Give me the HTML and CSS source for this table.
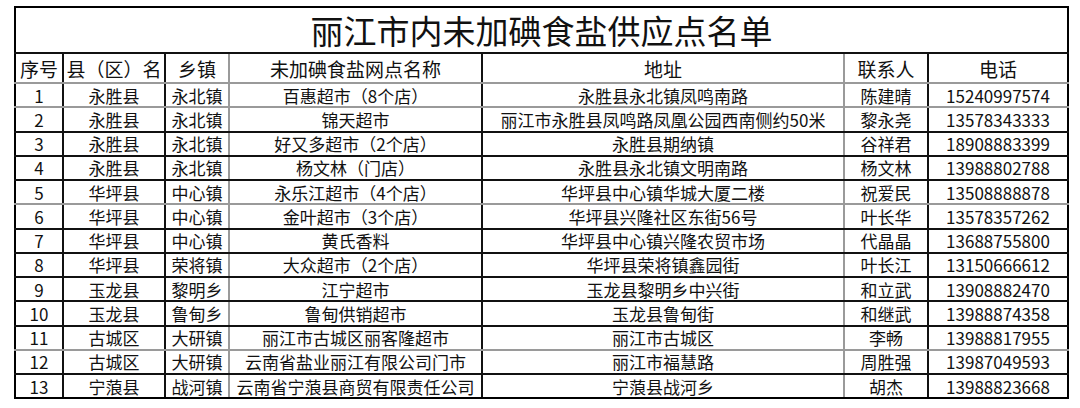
FILE: index.html
```html
<!DOCTYPE html>
<html lang="zh-CN">
<head>
<meta charset="utf-8">
<title>丽江市内未加碘食盐供应点名单</title>
<link rel="stylesheet" href="styles.css">
</head>
<body>
<table class="list">
  <colgroup>
    <col class="c-no"><col class="c-county"><col class="c-town"><col class="c-name"><col class="c-addr"><col class="c-person"><col class="c-phone">
  </colgroup>
  <tr class="title-row"><td colspan="7" class="title">丽江市内未加碘食盐供应点名单</td></tr>
  <tr class="head-row">
    <th class="bk">序号</th><th class="bk spread">县（区）名</th><th class="gy">乡镇</th><th class="bk">未加碘食盐网点名称</th><th class="gy">地址</th><th class="bk">联系人</th><th>电话</th>
  </tr>
  <tr class="r gyb"><td class="bk">1</td><td class="bk">永胜县</td><td class="gy">永北镇</td><td class="bk">百惠超市（8个店）</td><td class="gy">永胜县永北镇凤鸣南路</td><td class="bk">陈建晴</td><td>15240997574</td></tr>
  <tr class="r"><td class="bk">2</td><td class="bk">永胜县</td><td class="gy">永北镇</td><td class="bk">锦天超市</td><td class="gy">丽江市永胜县凤鸣路凤凰公园西南侧约50米</td><td class="bk">黎永尧</td><td>13578343333</td></tr>
  <tr class="r"><td class="bk">3</td><td class="bk">永胜县</td><td class="gy">永北镇</td><td class="bk">好又多超市（2个店）</td><td class="gy">永胜县期纳镇</td><td class="bk">谷祥君</td><td>18908883399</td></tr>
  <tr class="r"><td class="bk">4</td><td class="bk">永胜县</td><td class="gy">永北镇</td><td class="bk">杨文林（门店）</td><td class="gy">永胜县永北镇文明南路</td><td class="bk">杨文林</td><td>13988802788</td></tr>
  <tr class="r gyb"><td class="bk">5</td><td class="bk">华坪县</td><td class="gy">中心镇</td><td class="bk">永乐江超市（4个店）</td><td class="gy">华坪县中心镇华城大厦二楼</td><td class="bk">祝爱民</td><td>13508888878</td></tr>
  <tr class="r"><td class="bk">6</td><td class="bk">华坪县</td><td class="gy">中心镇</td><td class="bk">金叶超市（3个店）</td><td class="gy">华坪县兴隆社区东街56号</td><td class="bk">叶长华</td><td>13578357262</td></tr>
  <tr class="r"><td class="bk">7</td><td class="bk">华坪县</td><td class="gy">中心镇</td><td class="bk">黄氏香料</td><td class="gy">华坪县中心镇兴隆农贸市场</td><td class="bk">代晶晶</td><td>13688755800</td></tr>
  <tr class="r"><td class="bk">8</td><td class="bk">华坪县</td><td class="gy">荣将镇</td><td class="bk">大众超市（2个店）</td><td class="gy">华坪县荣将镇鑫园街</td><td class="bk">叶长江</td><td>13150666612</td></tr>
  <tr class="r"><td class="bk">9</td><td class="bk">玉龙县</td><td class="gy">黎明乡</td><td class="bk">江宁超市</td><td class="gy">玉龙县黎明乡中兴街</td><td class="bk">和立武</td><td>13908882470</td></tr>
  <tr class="r"><td class="bk">10</td><td class="bk">玉龙县</td><td class="gy">鲁甸乡</td><td class="bk">鲁甸供销超市</td><td class="gy">玉龙县鲁甸街</td><td class="bk">和继武</td><td>13988874358</td></tr>
  <tr class="r gyb"><td class="bk">11</td><td class="bk">古城区</td><td class="gy">大研镇</td><td class="bk">丽江市古城区丽客隆超市</td><td class="gy">丽江市古城区</td><td class="bk">李畅</td><td>13988817955</td></tr>
  <tr class="r"><td class="bk">12</td><td class="bk">古城区</td><td class="gy">大研镇</td><td class="bk">云南省盐业丽江有限公司门市</td><td class="gy">丽江市福慧路</td><td class="bk">周胜强</td><td>13987049593</td></tr>
  <tr class="r last"><td class="bk">13</td><td class="bk">宁蒗县</td><td class="gy">战河镇</td><td class="bk">云南省宁蒗县商贸有限责任公司</td><td class="gy">宁蒗县战河乡</td><td class="bk">胡杰</td><td>13988823668</td></tr>
</table>
</body>
</html>
```

FILE: styles.css
```css
html, body {
  margin: 0;
  padding: 0;
  background: #fff;
}
body {
  padding: 6px 0 0 14px;
  font-family: "Noto Sans CJK SC", "Microsoft YaHei", sans-serif;
  color: #111;
}
.list {
  border-collapse: collapse;
  table-layout: fixed;
  width: 1053px;
  border: 2px solid #000;
}
.c-no { width: 48px; }
.c-county { width: 102px; }
.c-town { width: 64px; }
.c-name { width: 253px; }
.c-addr { width: 362px; }
.c-person { width: 84px; }
.c-phone { width: 140px; }

.list td, .list th {
  padding: 0;
  text-align: center;
  vertical-align: middle;
  font-weight: normal;
  white-space: nowrap;
  border-bottom: 2px solid #111;
  line-height: 1;
}
.title-row { height: 46px; }
.title {
  font-size: 33px;
  border-bottom: 2px solid #000;
  padding-top: 2px;
}
.head-row { height: 30px; }
.head-row th {
  font-size: 19px;
  border-bottom-color: #9a9a9a;
}
.spread {
  letter-spacing: 0;
}
.r { height: 24.25px; }
.r td { font-size: 17px; }
.gyb td { border-bottom-color: #9a9a9a; }
.list .bk { border-right: 2px solid #111; }
.list .gy { border-right: 2px solid #9a9a9a; }
.last td { border-bottom: 2px solid #000; }
```
